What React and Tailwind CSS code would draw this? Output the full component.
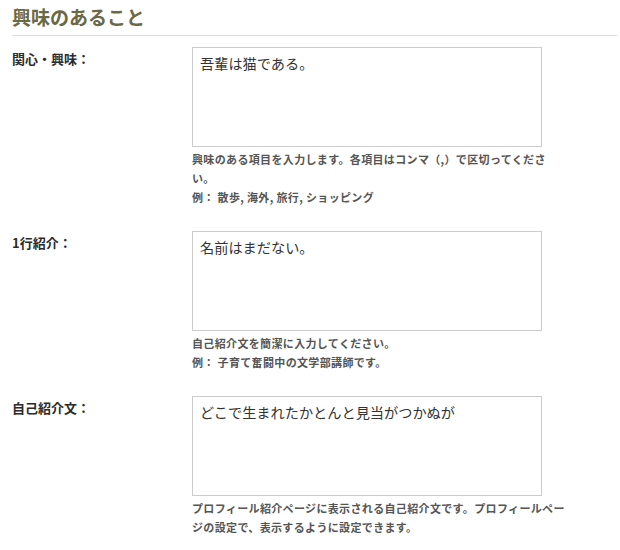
export default function App() {
  const font = { fontFamily: '"Noto Sans CJK JP", "Noto Sans", sans-serif' };
  const rows = [
    {
      label: "関心・興味：",
      value: "吾輩は猫である。",
      help: [
        "興味のある項目を入力します。各項目はコンマ（,）で区切ってください。",
        "例： 散歩, 海外, 旅行, ショッピング",
      ],
    },
    {
      label: "1行紹介：",
      value: "名前はまだない。",
      help: ["自己紹介文を簡潔に入力してください。", "例： 子育て奮闘中の文学部講師です。"],
    },
    {
      label: "自己紹介文：",
      value: "どこで生まれたかとんと見当がつかぬが",
      help: ["プロフィール紹介ページに表示される自己紹介文です。プロフィールページの設定で、表示するように設定できます。"],
    },
  ];
  return (
    <div className="w-[620px] h-[550px] bg-white pl-3 pr-[3px] pt-[4px]" style={font}>
      <h2 className="text-[19px] font-bold text-[#6b6846] leading-[26px] pb-[5px] border-b border-[#dddddd]">
        興味のあること
      </h2>
      <div className="flex flex-col gap-[24px] mt-[11px]">
        {rows.map((r) => (
          <div key={r.label} className="flex">
            <div className="w-[180px] shrink-0 pt-[3px] text-[13px] font-bold text-[#2b2b2b] leading-[18px]">
              {r.label}
            </div>
            <div className="flex flex-col">
              <textarea
                readOnly
                value={r.value}
                className="w-[350px] h-[100px] border border-[#cccccc] bg-white px-[7px] py-[4px] text-[14.2px] leading-[22px] text-[#333333] resize-none outline-none"
                style={font}
              />
              <div className="w-[376px] mt-[3px] text-[11px] tracking-[0.35px] font-bold text-[#555555] leading-[19px]">
                {r.help.map((h) => (
                  <p key={h}>{h}</p>
                ))}
              </div>
            </div>
          </div>
        ))}
      </div>
    </div>
  );
}
